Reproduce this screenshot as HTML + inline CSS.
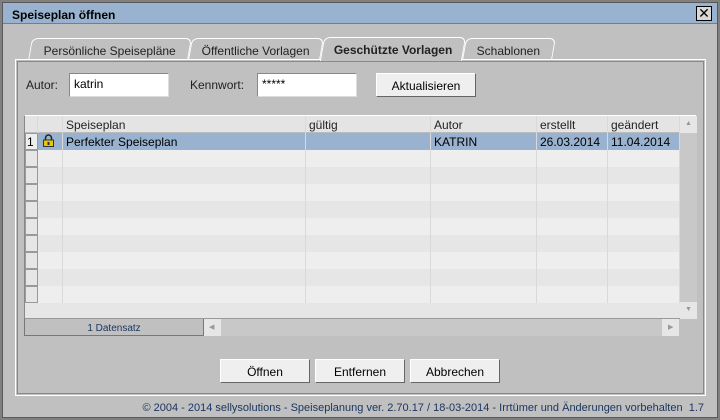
<!DOCTYPE html>
<html><head><meta charset="utf-8"><style>
*{margin:0;padding:0;box-sizing:border-box}
body{width:720px;height:420px;background:#808080;font-family:"Liberation Sans",Arial,sans-serif;font-size:12px;color:#000;position:relative;overflow:hidden}
.a{position:absolute}
.win{left:2px;top:2px;width:716px;height:416px;background:#c0c0c0;border:1px solid #5a5a5a}
.title{left:3px;top:3px;width:714px;height:21px;background:#98b2d0;border-bottom:1px solid #6b7f99;font-weight:bold;font-size:12px;padding:5px 0 0 9px}
.close{left:696px;top:6px;width:16px;height:15px;background:#d8d8d8;border:1px solid #000;font-size:14px;line-height:12px;text-align:center}
.panel{left:15px;top:59px;width:691px;height:337px;border:1px solid #fff;outline:1px solid #888;outline-offset:-3px}
.tab{top:38px;height:22px;border:1px solid #fff;border-bottom:none;border-radius:6px 6px 0 0;background:#c0c0c0;padding:5px 0 0 0;text-align:center;color:#222;font-size:12px;transform:skewX(-10deg)}
.tab span{display:inline-block;transform:skewX(10deg)}
.inp{background:#fff;border:1px solid #888;border-right-color:#ddd;border-bottom-color:#ddd;height:24px;padding:3px 0 0 4px}
.btn{background:#efefef;border:1px solid #fff;border-right-color:#666;border-bottom-color:#666;height:24px;text-align:center;padding-top:5px}
.grid{left:24px;top:115px;width:672px;height:204px;background:#e6e6e6;border-top:1px solid #fff;border-left:1px solid #888}
.row{position:absolute;left:0;width:655px;height:17px;}
.c{position:absolute;top:0;height:17px;border-right:1px solid #d9d9d9;padding:2px 0 0 3px;white-space:nowrap}
</style></head><body>
<div class="a win"></div>
<div class="a title">Speiseplan öffnen</div>
<div class="a close">✕</div>
<div class="a tab" style="left:30px;width:160px"><span>Persönliche Speisepläne</span></div>
<div class="a tab" style="left:190px;width:132px"><span>Öffentliche Vorlagen</span></div>
<div class="a tab" style="left:464px;width:90px"><span>Schablonen</span></div>
<div class="a panel"></div>
<div class="a tab" style="left:322px;width:142px;top:37px;height:24px;border-bottom:none;font-weight:bold;background:#c0c0c0;z-index:2"><span>Geschützte Vorlagen</span></div>
<div class="a" style="left:26px;top:78px;color:#222">Autor:</div>
<div class="a inp" style="left:69px;top:73px;width:100px">katrin</div>
<div class="a" style="left:190px;top:78px;color:#222">Kennwort:</div>
<div class="a inp" style="left:257px;top:73px;width:100px">*****</div>
<div class="a btn" style="left:376px;top:73px;width:100px">Aktualisieren</div>

<div class="a grid">
<div class="row" style="top:0;background:#e4e4e4;border-bottom:1px solid #bbb;color:#222">
<div class="c" style="left:0;width:13px"></div><div class="c" style="left:13px;width:25px"></div><div class="c" style="left:38px;width:243px">Speiseplan</div><div class="c" style="left:281px;width:125px">gültig</div><div class="c" style="left:406px;width:106px">Autor</div><div class="c" style="left:512px;width:71px">erstellt</div><div class="c" style="left:583px;width:72px">geändert</div></div>
<div class="row" style="top:17px;background:#98b2d0">
<div class="c" style="left:0;width:13px;background:#eee;border:1px solid #999;padding:1px 0 0 1px">1</div><div class="c" style="left:13px;width:25px;padding:1px 0 0 4px"><svg width="13" height="13" viewBox="0 0 13 13"><path d="M3.5 6V4a3 3 0 0 1 6 0v2" fill="none" stroke="#222" stroke-width="1.5"/><rect x="1.5" y="6" width="10" height="6.5" fill="#e8c800" stroke="#333"/><rect x="5.5" y="8" width="2" height="3" fill="#333"/></svg></div><div class="c" style="left:38px;width:243px">Perfekter Speiseplan</div><div class="c" style="left:281px;width:125px"></div><div class="c" style="left:406px;width:106px">KATRIN</div><div class="c" style="left:512px;width:71px">26.03.2014</div><div class="c" style="left:583px;width:72px">11.04.2014</div></div>
<div id="rows"></div>
<div class="a" style="left:0;top:202px;width:655px;height:1px;background:#999"></div>
<div class="a" style="left:655px;top:0;width:17px;height:203px;background:#c8c8c8"><div style="height:17px;background:#e6e6e6;text-align:center;font-size:7px;color:#999;padding-top:4px">▲</div><div class="a" style="bottom:0;width:17px;height:17px;background:#e6e6e6;text-align:center;font-size:7px;color:#999;padding-top:4px">▼</div></div>
</div>
<div class="a" style="left:24px;top:319px;width:655px;height:17px;background:#c8c8c8"></div>
<div class="a" style="left:24px;top:319px;width:180px;height:17px;background:#c0c0c0;border-bottom:1px solid #777;border-right:1px solid #777;border-left:1px solid #777;font-size:10px;color:#1c3660;text-align:center;padding-top:4px">1 Datensatz</div>
<div class="a" style="left:204px;top:319px;width:17px;height:17px;background:#e6e6e6;font-size:7px;color:#999;padding:4px 0 0 5px">◀</div>
<div class="a" style="left:662px;top:319px;width:17px;height:17px;background:#e6e6e6;font-size:7px;color:#999;padding:4px 0 0 6px">▶</div>
<div class="a btn" style="left:220px;top:359px;width:90px">Öffnen</div>
<div class="a btn" style="left:315px;top:359px;width:90px">Entfernen</div>
<div class="a btn" style="left:410px;top:359px;width:90px">Abbrechen</div>
<div class="a" style="right:16px;top:402px;font-size:11px;color:#1c3660;white-space:nowrap">© 2004 - 2014 sellysolutions - Speiseplanung ver. 2.70.17 / 18-03-2014 - Irrtümer und Änderungen vorbehalten&nbsp; 1.7</div>
<script>
var h='';for(var i=0;i<9;i++){var t=34+i*17;h+='<div class="row" style="top:'+t+'px;background:'+(i%2?'#e6e6e6':'#eeeeee')+'"><div class="c" style="left:0;width:13px;background:#e6e6e6;border:1px solid #999"></div><div class="c" style="left:13px;width:25px"></div><div class="c" style="left:38px;width:243px"></div><div class="c" style="left:281px;width:125px"></div><div class="c" style="left:406px;width:106px"></div><div class="c" style="left:512px;width:71px"></div><div class="c" style="left:583px;width:72px"></div></div>';}
document.getElementById('rows').innerHTML=h;
</script>
</body></html>
